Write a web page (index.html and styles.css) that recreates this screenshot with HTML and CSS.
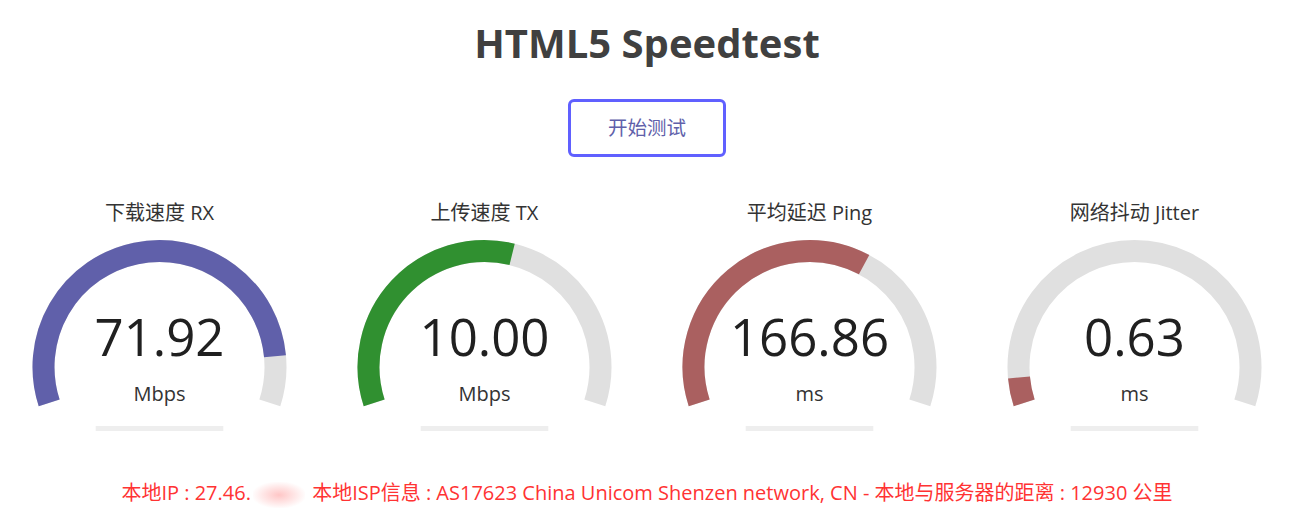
FILE: index.html
```html
<!DOCTYPE html>
<html lang="zh">
<head>
<meta charset="utf-8">
<title>HTML5 Speedtest</title>
<link rel="stylesheet" href="styles.css">
</head>
<body>
<div class="page">
<h1 class="title">HTML5 Speedtest</h1>
<div class="btn-row"><div class="start-btn">开始测试</div></div>
<div class="tests">
  <div class="test">
    <svg class="meter" width="319" height="245" viewBox="0 0 319 245">
      <path d="M49.18 212.85 A116 116 0 1 1 269.82 212.85" fill="none" stroke="#E0E0E0" stroke-width="22"/>
      <path d="M49.18 212.85 A116 116 0 1 1 275.00 166.20" fill="none" stroke="#6060AA" stroke-width="22"/>
      <rect x="95.7" y="236" width="127.6" height="5" fill="#EEEEEE"/>
    </svg>
    <div class="overlay">
      <div class="test-name">下载速度 RX</div>
      <div class="meter-text">71.92</div>
      <div class="unit">Mbps</div>
    </div>
  </div>
  <div class="test">
    <svg class="meter" width="319" height="245" viewBox="0 0 319 245">
      <path d="M49.18 212.85 A116 116 0 1 1 269.82 212.85" fill="none" stroke="#E0E0E0" stroke-width="22"/>
      <path d="M49.18 212.85 A116 116 0 0 1 187.13 64.34" fill="none" stroke="#309030" stroke-width="22"/>
      <rect x="95.7" y="236" width="127.6" height="5" fill="#EEEEEE"/>
    </svg>
    <div class="overlay">
      <div class="test-name">上传速度 TX</div>
      <div class="meter-text">10.00</div>
      <div class="unit">Mbps</div>
    </div>
  </div>
  <div class="test">
    <svg class="meter" width="319" height="245" viewBox="0 0 319 245">
      <path d="M49.18 212.85 A116 116 0 1 1 269.82 212.85" fill="none" stroke="#E0E0E0" stroke-width="22"/>
      <path d="M49.18 212.85 A116 116 0 0 1 214.09 74.65" fill="none" stroke="#AA6060" stroke-width="22"/>
      <rect x="95.7" y="236" width="127.6" height="5" fill="#EEEEEE"/>
    </svg>
    <div class="overlay">
      <div class="test-name">平均延迟 Ping</div>
      <div class="meter-text">166.86</div>
      <div class="unit">ms</div>
    </div>
  </div>
  <div class="test">
    <svg class="meter" width="319" height="245" viewBox="0 0 319 245">
      <path d="M49.18 212.85 A116 116 0 1 1 269.82 212.85" fill="none" stroke="#E0E0E0" stroke-width="22"/>
      <path d="M49.18 212.85 A116 116 0 0 1 43.98 187.51" fill="none" stroke="#AA6060" stroke-width="22"/>
      <rect x="95.7" y="236" width="127.6" height="5" fill="#EEEEEE"/>
    </svg>
    <div class="overlay">
      <div class="test-name">网络抖动 Jitter</div>
      <div class="meter-text">0.63</div>
      <div class="unit">ms</div>
    </div>
  </div>
</div>
<div class="ip-info">本地IP : 27.46.<span class="masked"></span> 本地ISP信息 : AS17623 China Unicom Shenzen network, CN - 本地与服务器的距离 : 12930 公里</div>
</div>
</body>
</html>
```

FILE: styles.css
```css
html, body {
  margin: 0;
  padding: 0;
  background: #ffffff;
}
body {
  font-family: "Open Sans", "Noto Sans CJK SC", sans-serif;
  color: #202020;
  text-align: center;
}
.page {
  width: 1294px;
}
.title {
  margin: 18px 0 0 0;
  font-size: 40px;
  line-height: 50px;
  font-weight: 700;
  color: #404040;
}
.btn-row {
  display: flex;
  justify-content: center;
  margin-top: 31px;
}
.start-btn {
  box-sizing: border-box;
  width: 158px;
  height: 58px;
  border: 3px solid #6060FF;
  border-radius: 6px;
  color: #6060AA;
  font-size: 19.5px;
  line-height: 52px;
}
.tests {
  display: flex;
  gap: 6px;
  margin-top: 33px;
}
.test {
  display: grid;
  width: 319px;
  height: 245px;
  flex: 0 0 319px;
}
.meter, .overlay {
  grid-area: 1 / 1;
}
.meter {
  display: block;
}
.overlay {
  display: flex;
  flex-direction: column;
  align-items: center;
}
.test-name {
  margin-top: 10px;
  font-size: 20px;
  line-height: 26px;
  color: #333333;
}
.meter-text {
  margin-top: 80px;
  font-size: 51px;
  line-height: 60px;
  color: #202020;
}
.unit {
  margin-top: 14px;
  font-size: 20px;
  line-height: 28px;
  color: #333333;
}
.ip-info {
  margin-top: 45px;
  font-size: 20px;
  line-height: 26px;
  color: #ff3333;
}
.masked {
  display: inline-block;
  vertical-align: middle;
  width: 52px;
  height: 26px;
  margin: 0 2px;
  background: radial-gradient(ellipse at center, #ffc6c6 0%, #ffe4e4 40%, #ffffff 75%);
}
```
